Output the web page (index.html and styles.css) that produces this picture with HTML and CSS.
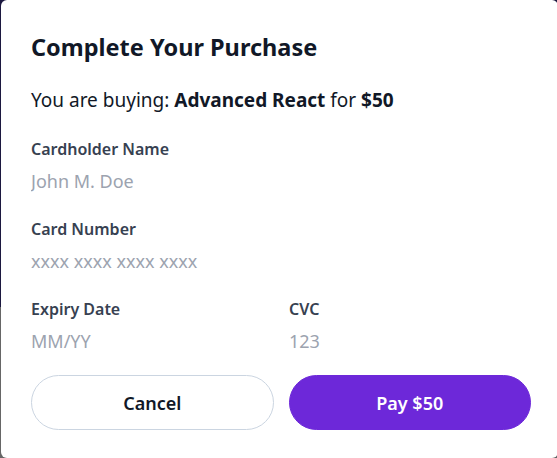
FILE: index.html
```html
<!DOCTYPE html>
<html lang="en">
<head>
<meta charset="utf-8">
<title>Complete Your Purchase</title>
<link rel="stylesheet" href="styles.css">
</head>
<body>
<div class="modal">
  <h1 class="title">Complete Your Purchase</h1>
  <p class="summary">You are buying: <strong>Advanced React</strong> for <strong>$50</strong></p>
  <form class="form">
    <div class="field">
      <label class="label" for="name">Cardholder Name</label>
      <input class="input" id="name" type="text" placeholder="John M. Doe">
    </div>
    <div class="field">
      <label class="label" for="number">Card Number</label>
      <input class="input" id="number" type="text" placeholder="xxxx xxxx xxxx xxxx">
    </div>
    <div class="row">
      <div class="field">
        <label class="label" for="exp">Expiry Date</label>
        <input class="input" id="exp" type="text" placeholder="MM/YY">
      </div>
      <div class="field">
        <label class="label" for="cvc">CVC</label>
        <input class="input" id="cvc" type="text" placeholder="123">
      </div>
    </div>
    <div class="actions">
      <button type="button" class="btn btn-cancel">Cancel</button>
      <button type="button" class="btn btn-pay">Pay $50</button>
    </div>
  </form>
</div>
</body>
</html>
```
FILE: styles.css
```css
* { box-sizing: border-box; }
html, body { margin: 0; height: 100%; overflow: hidden; }
body {
  background: linear-gradient(to bottom, #1c1840 0, #1c1840 307px, #666 307px, #666 100%);
  font-family: "Noto Sans", "Open Sans", sans-serif;
}
.modal {
  margin-left: 1px;
  width: 557px;
  height: 458px;
  background: #fff;
  border-radius: 6px;
  padding: 31px 27px 28px 30px;
  display: flex;
  flex-direction: column;
}
.title {
  margin: 0;
  font-size: 23.5px;
  line-height: 32px;
  font-weight: 700;
  color: #111827;
}
.summary {
  margin: 23px 0 0;
  font-size: 19px;
  line-height: 28px;
  color: #111827;
}
.summary strong { font-weight: 700; }
.form {
  margin-top: 23px;
  display: flex;
  flex-direction: column;
  gap: 22px;
}
.field {
  display: flex;
  flex-direction: column;
  gap: 6px;
}
.label {
  font-size: 16px;
  line-height: 24px;
  font-weight: 600;
  color: #374151;
}
.input {
  border: none;
  outline: none;
  padding: 0;
  margin: 0;
  height: 28px;
  font: inherit;
  font-size: 18px;
  line-height: 28px;
  color: #111827;
  background: transparent;
  width: 100%;
}
.input::placeholder { color: #9ca3af; opacity: 1; }
.row {
  display: grid;
  grid-template-columns: 1fr 1fr;
  gap: 16px;
}
.actions {
  margin-top: -2px;
  display: grid;
  grid-template-columns: 1fr 1fr;
  gap: 15px;
}
.btn {
  height: 55px;
  border-radius: 999px;
  font: inherit;
  font-size: 18px;
  font-weight: 600;
  cursor: pointer;
}
.btn-cancel {
  background: #fff;
  border: 1px solid #cbd5e1;
  color: #111827;
}
.btn-pay {
  background: #6d28d9;
  border: 1px solid #6d28d9;
  color: #fff;
}
```
